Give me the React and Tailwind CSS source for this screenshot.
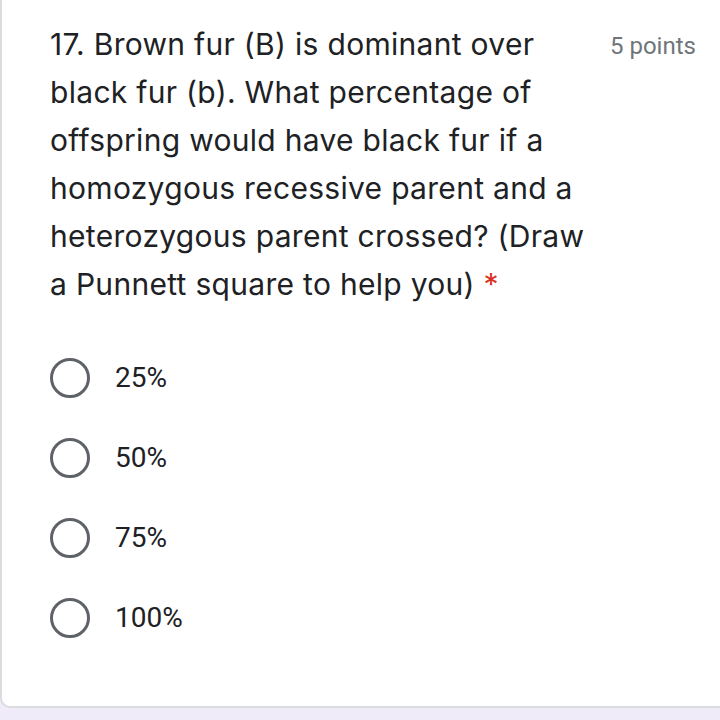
const options = ["25%", "50%", "75%", "100%"];

export default function App() {
  return (
    <div className="w-[720px] h-[720px] bg-[#f0ebf8] overflow-hidden" style={{ fontFamily: "Roboto, 'Liberation Sans', sans-serif" }}>
      <div className="h-[708px] bg-white border-l-2 border-b-2 border-[#dadce0] rounded-bl-[10px] w-[740px] pl-[48px] pt-[20px]">
        <div className="flex items-start">
          <div className="w-[560px] text-[30px] tracking-[0.3px] leading-[48px] text-[#202124] font-['Inter',sans-serif]">
            17. Brown fur (B) is dominant over<br />
            black fur (b). What percentage of<br />
            offspring would have black fur if a<br />
            homozygous recessive parent and a<br />
            heterozygous parent crossed? (Draw<br />
            a Punnett square to help you) <span className="text-[#d93025]">*</span>
          </div>
          <div className="pt-[12px] text-[24px] leading-[28px] text-[#70757a]">5 points</div>
        </div>
        <div className="mt-[50px] flex flex-col gap-[40px]">
          {options.map((o) => (
            <div key={o} className="flex items-center h-[40px]">
              <div className="w-[40px] h-[40px] rounded-full border-[3.5px] border-[#5f6368]" />
              <span className="ml-[25px] text-[28px] text-[#202124]">{o}</span>
            </div>
          ))}
        </div>
      </div>
    </div>
  );
}
